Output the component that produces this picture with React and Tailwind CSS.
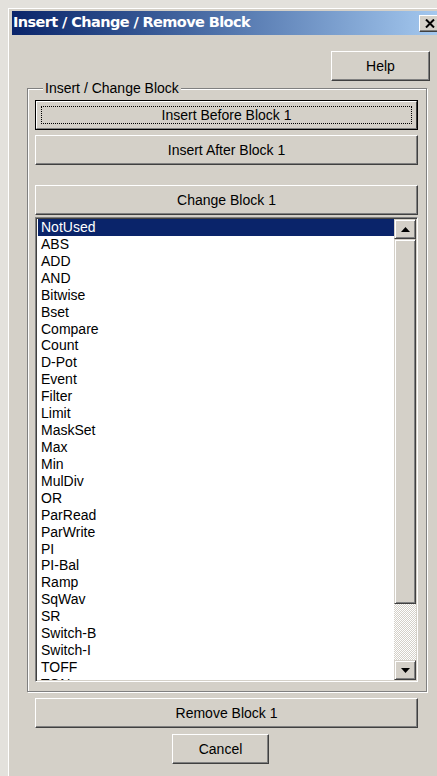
import React from 'react';

const blocks = [
    'NotUsed', 'ABS', 'ADD', 'AND', 'Bitwise', 'Bset', 'Compare', 'Count', 'D-Pot', 'Event',
    'Filter', 'Limit', 'MaskSet', 'Max', 'Min', 'MulDiv', 'OR', 'ParRead', 'ParWrite', 'PI',
    'PI-Bal', 'Ramp', 'SqWav', 'SR', 'Switch-B', 'Switch-I', 'TOFF', 'TON'
];

// classic raised 3D push button
const Button = ({ children, className = '' }) => (
    <button
        className={`flex items-center justify-center h-[30px] bg-[#d4d0c8] text-black text-[14px] leading-none border border-t-white border-l-white border-r-[#404040] border-b-[#404040] shadow-[inset_-1px_-1px_0_#808080] ${className}`}
    >
        {children}
    </button>
);

// default button: black frame + dotted focus rectangle
const DefaultButton = ({ children, className = '' }) => (
    <button className={`flex h-[30px] bg-[#d4d0c8] border border-black p-0 ${className}`}>
        <span className="flex-1 flex p-[4px] border border-t-white border-l-white border-r-[#404040] border-b-[#808080]">
            <span className="flex-1 flex items-center justify-center border border-dotted border-black text-black text-[14px] leading-none">
                {children}
            </span>
        </span>
    </button>
);

const ScrollButton = ({ down }) => (
    <div className="h-[20px] flex items-center justify-center bg-[#d4d0c8] border border-t-[#d4d0c8] border-l-[#d4d0c8] border-r-[#404040] border-b-[#404040] shadow-[inset_1px_1px_0_#fff,inset_-1px_-1px_0_#808080]">
        <svg width="9" height="5" viewBox="0 0 9 5">
            {down
                ? <polygon points="0,0 9,0 4.5,5" fill="#000" />
                : <polygon points="4.5,0 9,5 0,5" fill="#000" />}
        </svg>
    </div>
);

export default function App() {
    return (
        <div
            className="w-[437px] h-[776px] overflow-hidden bg-[#e3e1dc] pl-[8px] pt-[8px]"
            style={{ fontFamily: '"Liberation Sans", Arial, sans-serif' }}
        >
            <div className="w-[450px] h-[800px] bg-[#d4d0c8] border-l border-t border-white flex flex-col">
                {/* Title bar */}
                <div className="mt-[2px] ml-[3px] w-[430px] h-[24px] flex items-center bg-gradient-to-r from-[#0a246a] to-[#a6caf0]">
                    <span
                        className="ml-[1px] text-white font-bold text-[14.5px] tracking-[-0.6px]"
                        style={{ fontFamily: '"DejaVu Sans", Verdana, sans-serif' }}
                    >
                        Insert / Change / Remove Block
                    </span>
                    <div className="ml-auto mr-[2px] w-[21px] h-[17px] flex items-center justify-center bg-[#d4d0c8] border border-t-white border-l-white border-r-[#404040] border-b-[#404040] shadow-[inset_-1px_-1px_0_#808080]">
                        <svg width="10" height="9" viewBox="0 0 10 9">
                            <path d="M1 0.5 L9 8.5 M9 0.5 L1 8.5" stroke="#000" strokeWidth="2" />
                        </svg>
                    </div>
                </div>

                {/* Help */}
                <Button className="mt-[16px] ml-[322px] w-[99px]">Help</Button>

                {/* Group box */}
                <fieldset className="mt-[-1px] ml-[18px] w-[400px] border border-[#808080] shadow-[1px_1px_0_#fff,inset_1px_1px_0_#fff] pl-[7px] pr-[8px] pt-[4px] pb-[9px]">
                    <legend className="ml-[8px] px-[2px] bg-[#d4d0c8] text-[14px] leading-[16px] text-black">
                        Insert / Change Block
                    </legend>
                    <div className="flex flex-col">
                        <DefaultButton className="w-[383px]">Insert Before Block 1</DefaultButton>
                        <Button className="mt-[5px] w-[383px]">Insert After Block 1</Button>
                        <Button className="mt-[20px] w-[383px]">Change Block 1</Button>

                        {/* Block list */}
                        <div className="mt-[2px] w-[383px] h-[465px] flex bg-white border border-t-[#808080] border-l-[#808080] border-r-white border-b-white shadow-[inset_1px_1px_0_#404040,inset_-1px_-1px_0_#d4d0c8] pl-[2px] pr-[1px] py-[1px]">
                            <div className="flex-1 overflow-hidden">
                                {blocks.map((name, i) => (
                                    <div
                                        key={name}
                                        className={`h-[16.93px] pl-[3px] text-[14px] leading-[17px] whitespace-nowrap ${i === 0 ? 'bg-[#0a246a] text-white' : 'text-black'}`}
                                    >
                                        {name}
                                    </div>
                                ))}
                            </div>
                            <div className="w-[22px] flex flex-col">
                                <ScrollButton />
                                <div className="h-[365px] bg-[#d4d0c8] border border-t-[#d4d0c8] border-l-[#d4d0c8] border-r-[#404040] border-b-[#404040] shadow-[inset_1px_1px_0_#fff,inset_-1px_-1px_0_#808080]" />
                                <div className="flex-1 bg-[repeating-conic-gradient(#d4d0c8_0_25%,#fff_0_50%)] bg-[length:2px_2px]" />
                                <ScrollButton down />
                            </div>
                        </div>
                    </div>
                </fieldset>

                <Button className="mt-[6px] ml-[26px] w-[383px]">Remove Block 1</Button>
                <Button className="mt-[6px] ml-[163px] w-[97px]">Cancel</Button>
            </div>
        </div>
    );
}
